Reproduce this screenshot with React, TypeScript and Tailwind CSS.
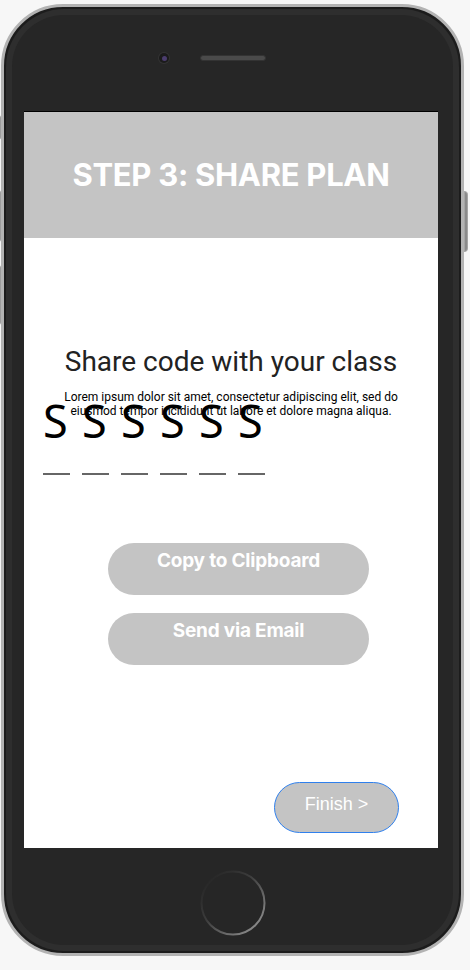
import React from "react";

const code = ["S", "S", "S", "S", "S", "S"];

const App = () => {
  return (
    <div className="relative w-[470px] h-[970px] overflow-hidden bg-[#f7f7f7]">
      {/* side buttons */}
      <div className="absolute left-0 top-[115px] h-[25px] w-[3px] rounded-l-sm bg-[#9c9c9c]" />
      <div className="absolute left-0 top-[190px] h-[52px] w-[3px] rounded-l-sm bg-[#9c9c9c]" />
      <div className="absolute left-0 top-[265px] h-[60px] w-[3px] rounded-l-sm bg-[#9c9c9c]" />
      <div className="absolute left-[464px] top-[191px] h-[61px] w-[4px] rounded-r-sm border border-[#a5a5a5] bg-[#8a8a8a]" />

      {/* phone body */}
      <div className="relative ml-px mt-1 h-[952px] w-[463px] rounded-[62px] border-[3px] border-[#b3b3b3] bg-[#1c1c1c] p-[2px]">
        <div className="h-full rounded-[58px] bg-[#2e2e2e] p-[6px]">
          <div className="flex h-full flex-col items-center rounded-[52px] bg-[#262626]">
            {/* camera + speaker */}
            <div className="ml-[147px] mt-[38px] flex items-center gap-[31px] self-start">
              <div className="flex h-[10px] w-[10px] items-center justify-center rounded-full bg-[#1b1b1b] ring-1 ring-[#333]">
                <div className="h-[5px] w-[5px] rounded-full bg-[#4b3d6e]" />
              </div>
              <div className="h-[6px] w-[66px] rounded-full border border-[#333] bg-[#4a4a4a]" />
            </div>

            {/* screen */}
            <div className="ml-[12px] mt-[48px] flex h-[737px] w-[414px] flex-col self-start border-t border-black bg-white">
              <div className="flex h-[126px] items-center justify-center bg-[#c4c4c4]">
                <h1 className="font-['Inter',sans-serif] text-[31px] font-bold tracking-[-0.3px] text-white">
                  STEP 3: SHARE PLAN
                </h1>
              </div>

              <h2 className="mt-[109px] text-center font-['Roboto',sans-serif] text-[28px] leading-[30px] text-[#222]">
                Share code with your class
              </h2>
              <p className="mx-auto mt-[13px] w-[340px] text-center font-['Roboto',sans-serif] text-[12px] leading-[14px] text-black">
                Lorem ipsum dolor sit amet, consectetur adipiscing elit, sed do eiusmod tempor incididunt ut labore et dolore magna aliqua.
              </p>

              {/* code boxes */}
              <div className="ml-[19px] mt-[-20px] flex gap-[12px]">
                {code.map((c, i) => (
                  <div key={i} className="flex w-[27px] flex-col">
                    <span className="font-['Noto_Sans',sans-serif] text-[45px] leading-[45px] text-black">
                      {c}
                    </span>
                    <div className="mt-[30px] h-[2px] w-[27px] bg-[#666]" />
                  </div>
                ))}
              </div>

              <button className="ml-[84px] mt-[68px] flex h-[52px] w-[261px] items-start justify-center self-start rounded-full bg-[#c4c4c4] pt-[7px] font-['Inter',sans-serif] text-[19px] font-bold leading-[22px] tracking-[-0.2px] text-white">
                Copy to Clipboard
              </button>
              <button className="ml-[84px] mt-[18px] flex h-[52px] w-[261px] items-start justify-center self-start rounded-full bg-[#c4c4c4] pt-[7px] font-['Inter',sans-serif] text-[19px] font-bold leading-[22px] tracking-[-0.2px] text-white">
                Send via Email
              </button>

              <button className="ml-[250px] mt-[117px] flex h-[51px] w-[125px] items-start justify-center self-start rounded-full border border-[#2f80ed] bg-[#c4c4c4] pt-[10px] font-['Liberation_Sans',sans-serif] text-[18px] leading-[22px] text-white">
                Finish &gt;
              </button>
            </div>

            {/* home button */}
            <svg className="mt-[22px]" width="66" height="66" viewBox="0 0 66 66">
              <defs>
                <linearGradient id="ring" gradientUnits="userSpaceOnUse" x1="8" y1="8" x2="58" y2="58">
                  <stop offset="0" stopColor="#262626" />
                  <stop offset="0.4" stopColor="#3c3c3c" />
                  <stop offset="1" stopColor="#8c8c8c" />
                </linearGradient>
              </defs>
              <circle cx="33" cy="33" r="31.5" fill="none" stroke="url(#ring)" strokeWidth="2" />
            </svg>
          </div>
        </div>
      </div>
    </div>
  );
};

export default App;
